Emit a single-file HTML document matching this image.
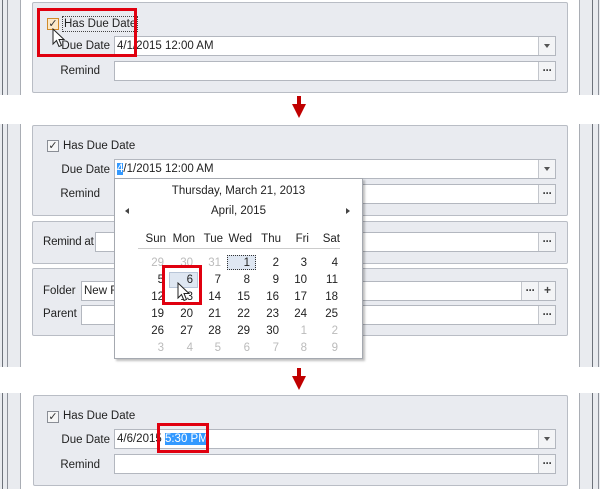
<!DOCTYPE html>
<html><head><style>
*{margin:0;padding:0;box-sizing:border-box}
body{width:600px;height:489px;position:relative;overflow:hidden;background:#fff;font-family:"Liberation Sans",sans-serif;font-size:11.5px;color:#222}
.a{position:absolute}
.sec{position:absolute;left:0;width:600px;background:#fff}
.ls{position:absolute;left:0;top:0;bottom:0;width:21px;background:#e9ebef;border-right:1px solid #a9adb4}
.ls:before{content:"";position:absolute;left:2px;top:0;bottom:0;width:1px;background:#6d727a}
.ls:after{content:"";position:absolute;left:7px;top:0;bottom:0;width:1px;background:#8d9199}
.rs{position:absolute;left:579px;top:0;bottom:0;width:21px;background:#e9ebef;border-left:1px solid #a9adb4}
.rs:before{content:"";position:absolute;left:12px;top:0;bottom:0;width:1px;background:#6d727a}
.rs:after{content:"";position:absolute;left:18px;top:0;bottom:0;width:1px;background:#8d9199}
.pn{position:absolute;background:#e9ebf0;border:1px solid #b9bdc5;border-radius:2px}
.in{position:absolute;background:#fff;border:1px solid #b3b7bf;height:20px;line-height:18px;padding-left:2px;white-space:nowrap;overflow:hidden}
.bt{position:absolute;top:0;right:0;width:17px;height:18px;border-left:1px solid #c3c6cc;background:#f3f4f6;text-align:center;font-size:12px;line-height:16px;color:#444;font-weight:bold;letter-spacing:-1px}
.dd:after{content:"";position:absolute;left:5px;top:7px;border:3.5px solid transparent;border-top:4px solid #555;border-bottom:0}
.lb{position:absolute;text-align:right;white-space:nowrap}
.cb{position:absolute;width:12px;height:12px;border:1px solid #8a8e96;background:#f6f6f6;font-size:11px;line-height:10px;text-align:center;color:#333}
.red{position:absolute;border:3px solid #e0000f}
.arr{position:absolute;left:292px;width:14px}
.arr:before{content:"";position:absolute;left:5px;top:0;width:4px;height:8px;background:#c00000}
.arr:after{content:"";position:absolute;left:0;top:8px;border-left:7px solid transparent;border-right:7px solid transparent;border-top:14px solid #c00000}
.cal{position:absolute;left:114px;top:178px;width:249px;height:181px;background:#fff;border:1px solid #a5a9b0;box-shadow:2px 2px 2px rgba(0,0,0,.25);font-size:11.5px}
.cal span{position:absolute;width:26px;text-align:right}
.g{color:#bbb}
</style></head><body>

<!-- section 1 -->
<div class="sec" style="top:0;height:95px"><div class="ls"></div><div class="rs"></div></div>
<div class="pn" style="left:32px;top:2px;width:536px;height:91px"></div>
<div class="cb" style="left:47px;top:18px;border-color:#d08a2a;background:#fbe9c9">✓</div>
<div class="a" style="left:62px;top:16px;border:1px dotted #444;padding:0 1px;line-height:14px">Has Due Date</div>
<div class="lb" style="left:60px;width:50px;top:40px">Due Date</div>
<div class="in" style="left:114px;top:36px;width:442px">4/1/2015 12:00 AM<div class="bt dd"></div></div>
<div class="lb" style="left:60px;width:40px;top:65px">Remind</div>
<div class="in" style="left:114px;top:61px;width:442px"><div class="bt">···</div></div>
<svg class="a" style="left:52px;top:28px" width="14" height="22" viewBox="0 0 14 22"><path d="M1 1 L1 16 L4.5 12.5 L7 18.5 L9.5 17.5 L7 11.5 L12 11.5 Z" fill="#fff" stroke="#222" stroke-width="1"/></svg>
<div class="red" style="left:37px;top:8px;width:100px;height:49px"></div>

<div class="arr" style="top:96px"></div>

<!-- section 2 -->
<div class="sec" style="top:124px;height:243px"><div class="ls"></div><div class="rs"></div></div>
<div class="pn" style="left:32px;top:125px;width:536px;height:91px"></div>
<div class="cb" style="left:47px;top:140px">✓</div>
<div class="a" style="left:63px;top:140px">Has Due Date</div>
<div class="lb" style="left:60px;width:50px;top:164px">Due Date</div>
<div class="in" style="left:114px;top:159px;width:442px"><span style="background:#3399ff;color:#fff">4</span>/1/2015 12:00 AM<div class="bt dd"></div></div>
<div class="lb" style="left:60px;width:40px;top:188px">Remind</div>
<div class="in" style="left:114px;top:184px;width:442px"><div class="bt">···</div></div>

<div class="pn" style="left:32px;top:221px;width:536px;height:43px"></div>
<div class="lb" style="left:43px;top:236px;letter-spacing:-0.2px">Remind at</div>
<div class="in" style="left:95px;top:232px;width:461px"><div class="bt">···</div></div>

<div class="pn" style="left:32px;top:268px;width:536px;height:68px"></div>
<div class="lb" style="left:43px;top:285px">Folder</div>
<div class="in" style="left:81px;top:281px;width:475px">New Folder<div class="bt" style="right:17px">···</div><div class="bt">+</div></div>
<div class="lb" style="left:43px;top:308px">Parent</div>
<div class="in" style="left:81px;top:305px;width:475px"><div class="bt">···</div></div>

<div class="cal">
<div class="a" style="left:0;width:247px;top:6px;text-align:center">Thursday, March 21, 2013</div>
<div class="a" style="left:0;width:247px;top:26px;text-align:center">April, 2015</div>
<div class="a" style="left:10px;top:29px;border:3px solid transparent;border-right:4px solid #444;border-left:0"></div>
<div class="a" style="left:231px;top:29px;border:3px solid transparent;border-left:4px solid #444;border-right:0"></div>
<div class="a" style="left:23px;top:69px;width:202px;height:1px;background:#ccc"></div>
<div class="a" style="left:112px;top:76px;width:29px;height:15px;border:1px dotted #333;background:#dfe7f2"></div>
<div class="a" style="left:54px;top:93px;width:29px;height:16px;border:1px solid #b9c6d8;background:#dfe7f2"></div>
<div id="cg"></div>
</div>
<script>
(function(){var cols=[49,78,106,135,164,192,223],names=["Sun","Mon","Tue","Wed","Thu","Fri","Sat"],h="";
names.forEach(function(n,i){h+='<span style="left:'+(cols[i]-30)+'px;width:32px;top:54px">'+n+'</span>';});
var d=[[29,30,31,1,2,3,4],[5,6,7,8,9,10,11],[12,13,14,15,16,17,18],[19,20,21,22,23,24,25],[26,27,28,29,30,1,2],[3,4,5,6,7,8,9]];
d.forEach(function(r,ri){r.forEach(function(v,ci){var g=(ri==0&&ci<3)||(ri==4&&ci>4)||ri==5;h+='<span class="'+(g?'g':'')+'" style="left:'+(cols[ci]-26)+'px;top:'+(78+ri*17)+'px">'+v+'</span>';});});
document.getElementById('cg').outerHTML=h;})();
</script>
<svg class="a" style="left:177px;top:282px" width="14" height="22" viewBox="0 0 14 22"><path d="M1 1 L1 16 L4.5 12.5 L7 18.5 L9.5 17.5 L7 11.5 L12 11.5 Z" fill="#fff" stroke="#222" stroke-width="1"/></svg>
<div class="red" style="left:162px;top:265px;width:40px;height:40px"></div>

<div class="arr" style="top:368px"></div>

<!-- section 3 -->
<div class="sec" style="top:393px;height:96px"><div class="ls"></div><div class="rs"></div></div>
<div class="pn" style="left:33px;top:395px;width:535px;height:91px"></div>
<div class="cb" style="left:47px;top:411px">✓</div>
<div class="a" style="left:63px;top:410px">Has Due Date</div>
<div class="lb" style="left:60px;width:50px;top:434px">Due Date</div>
<div class="in" style="left:114px;top:429px;width:442px">4/6/2015 <span style="background:#3399ff;color:#fff">5:30 PM</span><div class="bt dd"></div></div>
<div class="lb" style="left:60px;width:40px;top:459px">Remind</div>
<div class="in" style="left:114px;top:454px;width:442px"><div class="bt">···</div></div>
<div class="red" style="left:157px;top:423px;width:52px;height:30px"></div>
</body></html>
